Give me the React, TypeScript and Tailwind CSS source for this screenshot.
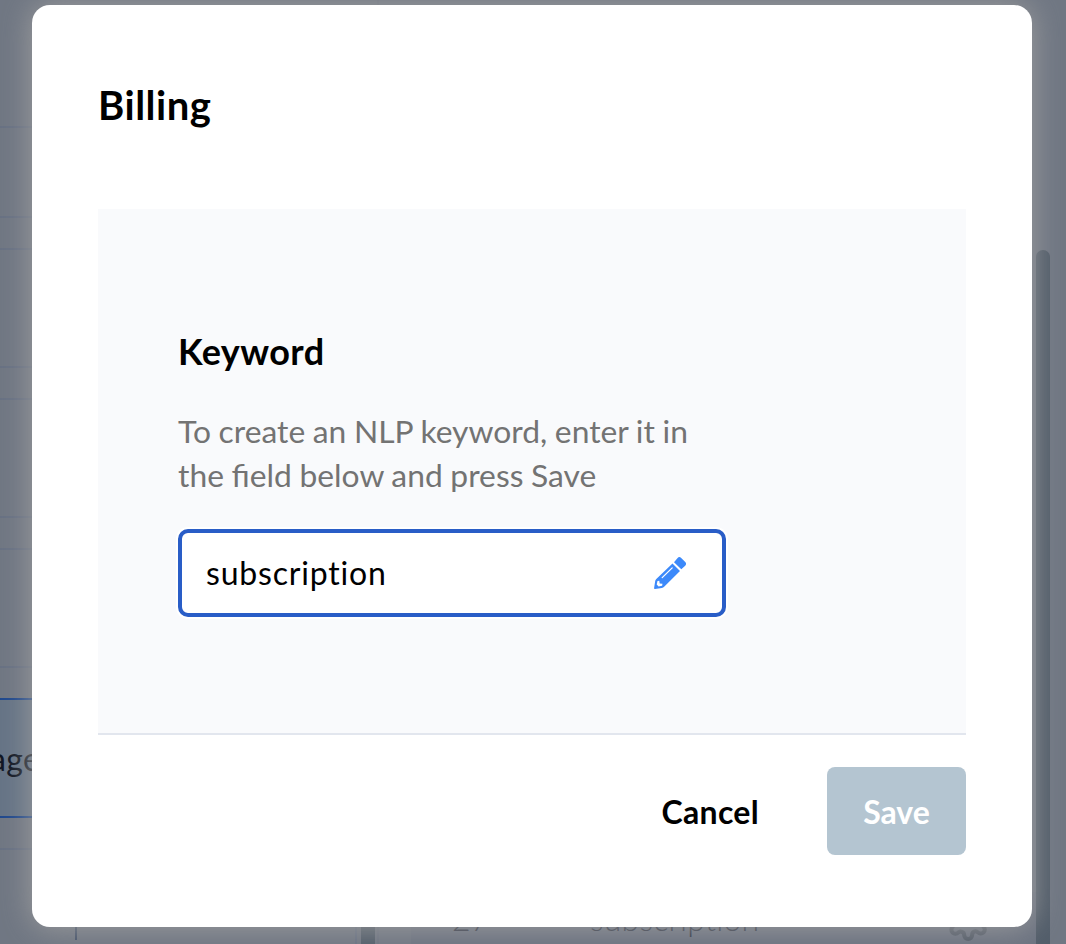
import { useState } from "react";
import { FiSettings } from "react-icons/fi";

interface KeywordModalProps {
  title: string;
  initialKeyword: string;
}

function PencilIcon() {
  return (
    <svg viewBox="0 0 32 32" className="size-[32px] shrink-0 text-[#3c89fa]" fill="currentColor">
      <path d="M20 5.2 L23.4 1.2 Q25.2 -0.8 27.2 0.9 L31 4.7 Q33 6.7 31.2 8.7 L27.3 12.3 Z" />
      <path
        fillRule="evenodd"
        d="M18.5 6.5 L26 13.9 L10.4 29.6 Q9.2 30.7 7.8 30.9 L1 32 Q0 32.1 0.1 31 L1.2 24.1 Q1.4 22.9 2.3 22.1 Z M3.5 24 L2.7 27.6 L4.6 29.6 L8.1 28.8 L8.5 26.8 L5.7 26.5 L5.3 23.8 Z"
      />
      <path d="M18.2 10.9 L8.2 20.6" fill="none" stroke="white" strokeWidth="1.3" strokeLinecap="round" />
    </svg>
  );
}

function IntentList() {
  return (
    <aside className="flex w-[361px] shrink-0 flex-col bg-[#707783]">
      <div className="h-[128px] shrink-0 border-b-2 border-[#687183]" />
      <div className="mb-[30px] h-[90px] shrink-0 border-b-2 border-[#687183]" />
      <div className="mb-[30px] h-[120px] shrink-0 border-y-2 border-[#687183]" />
      <div className="mb-[30px] h-[120px] shrink-0 border-y-2 border-[#687183]" />
      <div className="mb-[30px] h-[120px] shrink-0 border-y-2 border-[#687183]" />
      <div className="mb-[30px] flex h-[120px] shrink-0 items-center border-y-2 border-[#1f488d] bg-[#667486]">
        <span className="-ml-[10px] pt-[2px] text-[32px] leading-[40px] tracking-[0.4px] text-[#101623]">age</span>
      </div>
      <div className="mr-[4px] h-[120px] shrink-0 border-r-2 border-t-2 border-[#687183] pl-[75px]">
        <div className="h-[90px] w-[2px] bg-[#43516a]" />
      </div>
    </aside>
  );
}

function KeywordTable() {
  return (
    <main className="ml-[2px] flex grow flex-col justify-end border-l-2 border-[#6c7381] bg-[#707783] pl-[32px]">
      <div className="flex h-[52px] items-center bg-[#6c7381] pl-[41px] pt-[2px] text-[32px] font-light leading-[50px] text-[#2c3242]">
        <span className="w-[138px]">27</span>
        <span className="w-[354px] tracking-[0.2px]">subscription</span>
        <FiSettings className="-mt-[4px] size-[48px] shrink-0 text-[#535b68]" strokeWidth={2} />
      </div>
    </main>
  );
}

function KeywordModal({ title, initialKeyword }: KeywordModalProps) {
  const [keyword, setKeyword] = useState(initialKeyword);

  return (
    <div className="absolute inset-0 px-[32px] pt-[5px]">
      <div
        role="dialog"
        className="flex h-[922px] w-[1000px] flex-col rounded-[18px] bg-white px-[66px] shadow-[0_0_30px_#9f9f9f]"
      >
        <h2 className="pt-[76px] text-[40px] font-bold leading-[48px] tracking-[0.5px] text-black">{title}</h2>
        <div className="mt-[80px] h-[526px] border-b-2 border-[#e2e6ee] bg-[#f9fafc] px-[80px] pt-[120px]">
          <h3 className="text-[36px] font-bold leading-[44px] tracking-[0.4px] text-black">Keyword</h3>
          <p className="mt-[36px] w-[548px] text-[31.8px] leading-[44px] [word-spacing:-0.5px] text-[#737373]">
            To create an NLP keyword, enter it in
            <br />
            the field below and press Save
          </p>
          <div className="mt-[32px] flex h-[88px] w-[548px] items-center rounded-[10px] border-4 border-[#295dc7] bg-white pl-[24px] pr-[36px] shadow-[0_0_0_2px_#ffffff]">
            <input
              value={keyword}
              onChange={e => setKeyword(e.target.value)}
              className="w-0 grow bg-transparent text-[32px] tracking-[0.8px] text-black outline-none"
            />
            <PencilIcon />
          </div>
        </div>
        <div className="mt-[32px] flex items-center justify-end">
          <button type="button" className="mr-[68px] pt-[2px] text-[32px] font-bold tracking-[0.3px] text-black">
            Cancel
          </button>
          <button
            type="button"
            disabled
            className="h-[88px] w-[139px] rounded-[8px] bg-[#b4c5d1] pt-[2px] text-[32px] font-bold text-white"
          >
            Save
          </button>
        </div>
      </div>
    </div>
  );
}

export default function App() {
  return (
    <div className="relative flex h-[944px] w-[1066px] overflow-hidden bg-[#707783] font-['Lato',sans-serif]">
      <IntentList />
      <div className="flex w-[14px] shrink-0 flex-col justify-end">
        <div className="h-[400px] bg-[#525d6a]" />
      </div>
      <KeywordTable />
      <div className="w-[30px] shrink-0 pt-[250px]">
        <div className="h-[720px] w-[14px] rounded-full bg-[#525d6a]" />
      </div>
      <KeywordModal title="Billing" initialKeyword="subscription" />
    </div>
  );
}
